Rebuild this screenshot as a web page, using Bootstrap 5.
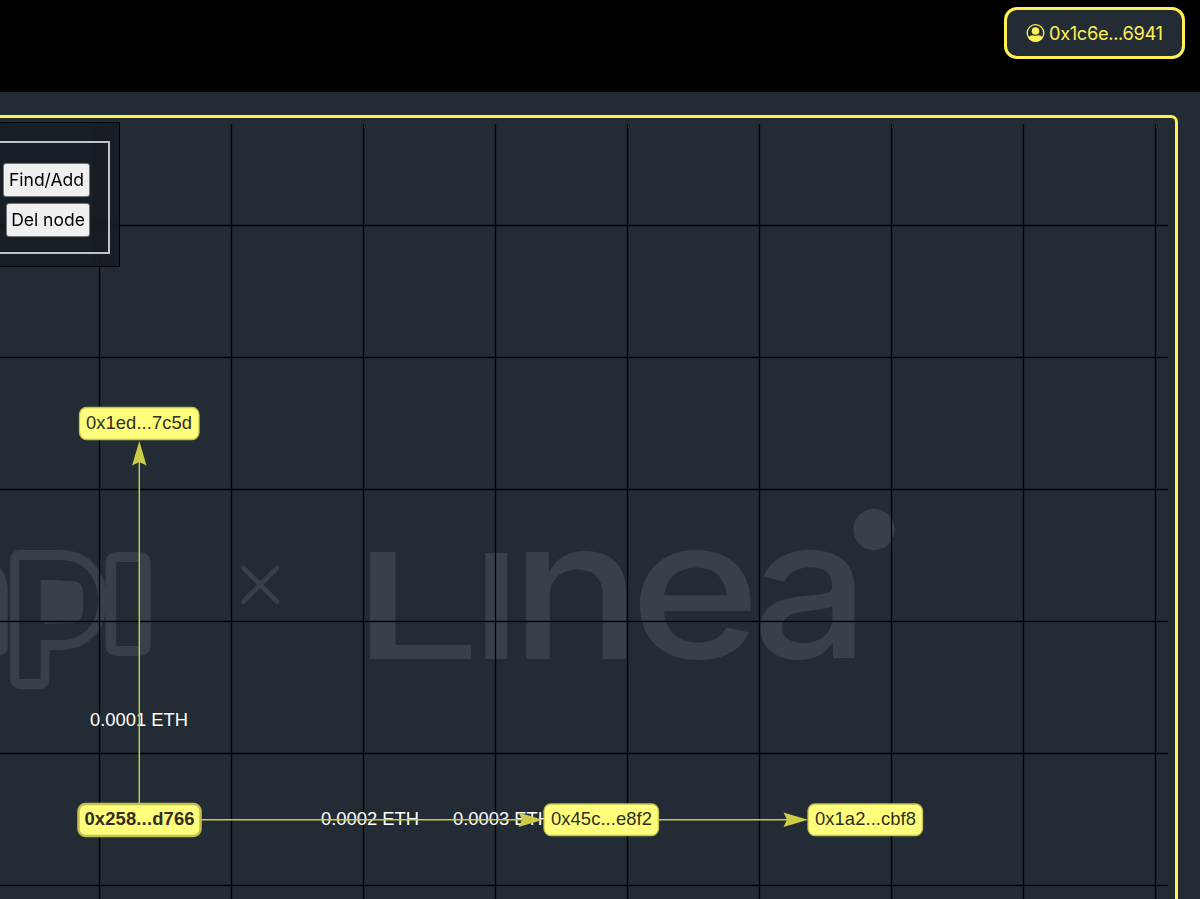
<!DOCTYPE html>
<html lang="en">
<head>
<meta charset="utf-8">
<meta name="viewport" content="width=device-width, initial-scale=1">
<title>Linea address graph</title>
<link href="https://cdn.jsdelivr.net/npm/bootstrap@5.3.0/dist/css/bootstrap.min.css" rel="stylesheet">
<style>
  body { background: #232c34; font-family: "Liberation Sans", Arial, sans-serif; }
  .topbar { height: 92px; background: #000; padding: 7px 15px 0 0; }
  .wallet { width: 181px; height: 52px; border: 3px solid #fff153; border-radius: 13px; background: #232c34; color: #fff153; font: 18.3px Inter, sans-serif; gap: 4px; padding: 0 0 1px; }
  .wallet:hover { color: #fff153; background: #2c3740; border-color: #fff153; }
  .stage { padding: 23px 22px 0 0; height: 807px; }
  .graph-frame { border: solid #fff153; border-width: 3px 3px 0 0; border-top-right-radius: 7px; padding: 6px 7px 0 0; }
  .tools { top: 4px; left: 0; width: 120px; height: 145px; border: solid #000; border-width: 1px 1px 1px 0; background: rgba(17, 20, 26, .52); backdrop-filter: blur(5px); padding: 18px 9px 12px 0; }
  .tools fieldset { border: 2px solid #bfc4c6; border-left: 0; height: 113px; padding: 20px 18px 0 0; gap: 6px; }
  .tool-btn { height: 34px; font: 17.5px/1 Inter, sans-serif; color: #000; background: #f0f0f1; border: 1px solid #74777a; border-radius: 3px; padding: 0 0 1px; white-space: nowrap; }
  .wordmark { font-family: Inter, sans-serif; font-weight: 500; fill: #374149; }
  .outlined { font-family: Inter, sans-serif; font-weight: 700; fill: #232c34; stroke: #374149; stroke-width: 20px; stroke-linejoin: round; paint-order: stroke; }
  .node-box { fill: #ffff7c; stroke: #c2c24d; stroke-width: 1.3px; }
  .node-text { font-size: 18.4px; fill: #302f22; }
  .edge-text { font-size: 18.4px; fill: #fff; }
  .edge { stroke: #cccc48; stroke-width: 1.4px; }
  .tip { fill: #cccc48; }
</style>
</head>
<body class="overflow-hidden">
<header class="topbar d-flex justify-content-end align-items-start">
  <button class="wallet btn d-flex align-items-center justify-content-center">
    <svg width="19" height="19" viewBox="0 0 19 19"><defs><clipPath id="face"><circle cx="9.5" cy="10" r="8.8"/></clipPath></defs><circle cx="9.5" cy="10" r="8.3" fill="none" stroke="currentColor" stroke-width="1.3"/><g clip-path="url(#face)" fill="currentColor"><circle cx="9.5" cy="8" r="3.8"/><path d="M1.800 15.200C3.500 12.800 5 12.200 7 12.200q2.500 1.300 5 0c2 0 3.500 .6 5.200 3V19H1.800z"/></g></svg>
    <svg width="115" height="24"><text x="0" y="18.500" textLength="114" fill="currentColor">0x1c6e...6941</text></svg>
  </button>
</header>
<main class="stage">
  <section class="graph-frame position-relative h-100">
    <svg class="d-block" width="1168" height="775" viewBox="0 124 1168 775">
      <!-- watermark -->
      <g aria-hidden="true">
        <text class="outlined" font-size="150" transform="translate(-80 646)">a</text>
        <text class="outlined" font-size="154" transform="translate(106 645.500) scale(1.060 1)">ı</text>
        <text class="outlined" font-size="163" transform="translate(9.500 679) scale(.890 1)">P</text>
        <path d="M44 581h27q12 0 12 12v17q0 12-12 13l-27 1z" fill="#374149"/>
        <path d="M243.500 568l33.500 33.500m0-33.500l-33.500 33.500" stroke="#374149" stroke-width="4.600" stroke-linecap="round"/>
        <g class="wordmark">
          <text font-size="147" transform="translate(351.500 658.500) scale(1.560 1)">L</text>
          <text font-size="195" transform="translate(471 658.500) scale(1.030 1)">ı</text>
          <text font-size="196" transform="translate(510.500 658.500) scale(1.115 1)">n</text>
          <text font-size="196" transform="translate(629.500 658) scale(1.140 1)">e</text>
          <text font-size="196" transform="translate(752 658) scale(1.055 1)">a</text>
        </g>
        <circle cx="874" cy="529.500" r="20.700" fill="#374149"/>
      </g>
      <path d="M99.500 124V899M231.500 124V899M363.500 124V899M495.500 124V899M627.500 124V899M759.500 124V899M891.500 124V899M1023.500 124V899M1155.500 124V899M0 225.500H1168M0 357.500H1168M0 489.500H1168M0 621.500H1168M0 753.500H1168M0 885.500H1168" stroke="#000" stroke-width="1.300"/>
      <!-- transfers -->
      <g class="edge-text">
        <text x="90" y="726" textLength="98">0.0001 ETH</text>
        <text x="321" y="825" textLength="98">0.0002 ETH</text>
        <text x="453" y="825" textLength="98">0.0003 ETH</text>
      </g>
      <path class="edge" d="M139.300 804V445M201 819.700H530M658 819.700H800"/>
      <path class="tip" d="M139.300 441l7.200 24.500-7.200-3.500-7.200 3.500zM543 819.700l-24.500-7.200 3.500 7.200-3.500 7.200zM808 819.700l-24.500-7.200 3.500 7.200-3.500 7.200z"/>
      <!-- addresses -->
      <g class="node-box">
        <rect x="79.500" y="407.500" width="119.500" height="32" rx="7"/>
        <rect x="78.500" y="804" width="122" height="32" rx="7" stroke-width="2.500"/>
        <rect x="544" y="804" width="114.500" height="31.500" rx="7"/>
        <rect x="808" y="804" width="114.500" height="31.500" rx="7"/>
      </g>
      <g class="node-text">
        <text x="86" y="429" textLength="106">0x1ed...7c5d</text>
        <text x="84.500" y="825" textLength="110" font-weight="700">0x258...d766</text>
        <text x="551" y="825" textLength="101">0x45c...e8f2</text>
        <text x="815" y="825" textLength="101">0x1a2...cbf8</text>
      </g>
    </svg>
    <aside class="tools position-absolute">
      <fieldset class="d-flex flex-column align-items-end">
        <button class="tool-btn" style="width:87px">Find/Add</button>
        <button class="tool-btn" style="width:84px">Del node</button>
      </fieldset>
    </aside>
  </section>
</main>
<script src="https://cdn.jsdelivr.net/npm/bootstrap@5.3.0/dist/js/bootstrap.bundle.min.js"></script>
</body>
</html>
